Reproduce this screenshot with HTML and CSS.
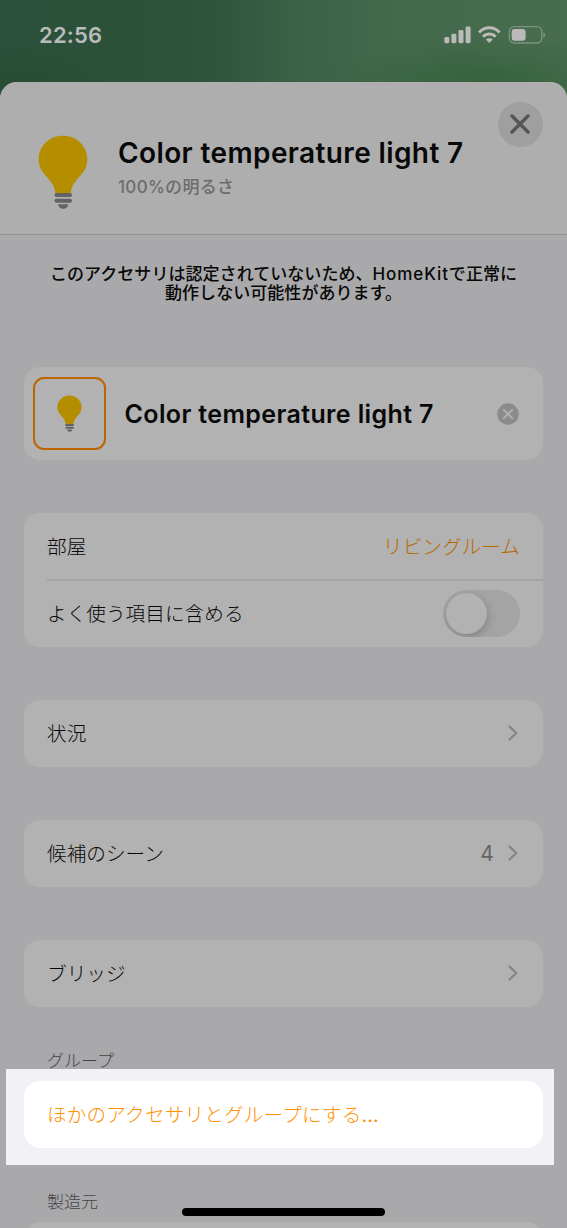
FILE: index.html
```html
<!DOCTYPE html>
<html lang="ja">
<head>
<meta charset="utf-8">
<title>Color temperature light 7</title>
<link rel="stylesheet" href="styles.css">
</head>
<body>
<svg class="defs" width="0" height="0" aria-hidden="true">
  <symbol id="bulb" viewBox="0 0 50 74">
    <path fill="var(--bulb)" d="M25 .8C11.2.8.7 11.4.7 24.4c0 7.6 3.5 12.3 8 17.4 5.2 5.8 8.3 10.2 8.500 16.800h15.600c.2-6.600 3.300-11 8.500-16.800 4.500-5.100 8-9.800 8-17.400C49.300 11.400 38.800.8 25 .8Z"/>
    <rect x="16.5" y="58" width="17.5" height="4" rx="2" fill="var(--base)"/>
    <rect x="16.5" y="63.7" width="17.5" height="4" rx="2" fill="var(--base)"/>
    <path fill="var(--base)" d="M20.300 69.200h9.800c0 2.800-2.200 4.500-4.900 4.500s-4.900-1.700-4.900-4.500Z"/>
  </symbol>
  <symbol id="chevron" viewBox="0 0 10 16">
    <path d="M1.500 1.500 8.300 8 1.500 14.500" fill="none" stroke="#858587" stroke-width="2.300" stroke-linecap="round" stroke-linejoin="round"/>
  </symbol>
</svg>
<div class="screen">
  <div class="status">
    <span class="clock">22:56</span>
    <svg class="indicators" width="102" height="20" viewBox="0 0 102 20">
      <g fill="#bababa">
        <rect x=".3" y="12" width="5" height="6.2" rx="1.4"/>
        <rect x="7.4" y="8.8" width="5" height="9.4" rx="1.4"/>
        <rect x="14.5" y="5" width="5" height="13.2" rx="1.4"/>
        <rect x="21.6" y="1.5" width="5" height="16.7" rx="1.4"/>
        <path d="M45.300 18 41.800 14.600c2-1.700 5-1.700 7 0Z"/>
      </g>
      <g fill="none" stroke="#bababa" stroke-width="3">
        <path d="M35.100 7.500c5.700-6.200 14.700-6.200 20.400 0"/>
        <path d="M39 11.700c3.500-3.700 9.100-3.700 12.600 0"/>
      </g>
      <rect x="65.3" y="1.7" width="32.5" height="16.3" rx="5" fill="none" stroke="#7c947f" stroke-width="1.3"/>
      <rect x="67.6" y="4" width="14" height="11.7" rx="3" fill="#bababa"/>
      <path d="M99.300 7.200c2.500 1 2.500 4.400 0 5.400Z" fill="#7c947f"/>
    </svg>
  </div>
  <main class="sheet">
    <header class="header">
      <svg class="bulb-large" width="50" height="74"><use href="#bulb"/></svg>
      <div class="heading">
        <h1 class="title">Color temperature light 7</h1>
        <p class="subtitle">100%の明るさ</p>
      </div>
      <button class="close" aria-label="閉じる">
        <svg width="20" height="20" viewBox="0 0 20 20"><path d="m2 2 16 16M18 2 2 18" stroke="#555557" stroke-width="3.3" stroke-linecap="round"/></svg>
      </button>
    </header>
    <p class="notice">このアクセサリは認定されていないため、<span class="latin">HomeKit</span>で正常に<br>動作しない可能性があります。</p>
    <section class="card name-card">
      <div class="icon-box"><svg width="25" height="37"><use href="#bulb"/></svg></div>
      <span class="name">Color temperature light 7</span>
      <svg class="clear" width="22" height="22" viewBox="0 0 22 22"><circle cx="11" cy="11" r="10.7" fill="#8b8b8c"/><path d="m6.800 6.800 8.400 8.400m0-8.400-8.400 8.400" stroke="#b2b2b2" stroke-width="1.9" stroke-linecap="round"/></svg>
    </section>
    <section class="card">
      <div class="row"><span>部屋</span><span class="room">リビングルーム</span></div>
      <div class="row divided"><span>よく使う項目に含める</span><span class="toggle"><span class="knob"></span></span></div>
    </section>
    <section class="card"><div class="row"><span>状況</span><svg class="chevron" width="10" height="16"><use href="#chevron"/></svg></div></section>
    <section class="card"><div class="row"><span>候補のシーン</span><span class="count">4</span><svg class="chevron" width="10" height="16"><use href="#chevron"/></svg></div></section>
    <section class="card"><div class="row"><span>ブリッジ</span><svg class="chevron" width="10" height="16"><use href="#chevron"/></svg></div></section>
    <h2 class="label">グループ</h2>
    <div class="spotlight"><section class="card bright"><div class="row"><span>ほかのアクセサリとグループにする<span class="dots">...</span></span></div></section></div>
    <h2 class="label maker">製造元</h2>
    <section class="card last"><div class="row"></div></section>
  </main>
  <div class="home-bar"></div>
</div>
</body>
</html>
```
FILE: styles.css
```css
:root {
  --bulb: #b58e00;
  --base: #636364;
  --orange: #b96800;
}
* { box-sizing: border-box; }
body { margin: 0; }
h1, h2, p { margin: 0; }
.defs { display: block; position: absolute; }
.screen {
  position: relative;
  width: 567px;
  height: 1228px;
  overflow: hidden;
  display: flex;
  flex-direction: column;
  font-family: Inter, "Noto Sans CJK JP", sans-serif;
  color: #080808;
  background:
    radial-gradient(ellipse 170px 45px at 480px 82px, #37633d, transparent),
    radial-gradient(ellipse 90px 36px at 25px 82px, #284d33, transparent),
    linear-gradient(90deg, #2b503b 0, #2d523b 170px, #30563f 225px, #3a6046 290px, #43694b 380px, #486c4e 567px);
}
.status {
  flex: none;
  height: 82px;
  padding: 20px 21px 0 39px;
  display: flex;
  justify-content: space-between;
}
.clock {
  font-size: 22px;
  line-height: 30px;
  font-weight: 600;
  letter-spacing: .2px;
  color: #bababa;
}
.indicators { margin-top: 5px; }
.sheet {
  flex: 1;
  min-height: 0;
  overflow: hidden;
  background: #a9a9ab;
  border-radius: 17px 17px 0 0;
  display: flex;
  flex-direction: column;
}
.header {
  flex: none;
  height: 153px;
  border-bottom: 1px solid #929294;
  background: #aeaeae;
  display: flex;
}
.bulb-large { flex: none; margin: 53px 30px 0 38px; }
.heading { flex: 1; padding-top: 52px; white-space: nowrap; }
.title {
  font-size: 28px;
  line-height: 38px;
  font-weight: 600;
  letter-spacing: .38px;
}
.subtitle {
  margin-top: 3px;
  font-size: 17px;
  line-height: 24px;
  font-weight: 500;
  letter-spacing: .3px;
  color: #6c6c6d;
}
.close {
  flex: none;
  width: 45px;
  height: 45px;
  margin: 19.5px 24.5px 0 0;
  padding: 0;
  border: 0;
  border-radius: 50%;
  background: #9f9f9f;
  display: flex;
  align-items: center;
  justify-content: center;
}
.notice {
  flex: none;
  height: 78px;
  margin: 30px 0 24px;
  font-size: 17px;
  line-height: 19px;
  font-weight: 500;
  letter-spacing: .05px;
  text-align: center;
  white-space: nowrap;
}
.latin { letter-spacing: .9px; }
.card {
  flex: none;
  margin: 0 24px 53px;
  border-radius: 16px;
  background: #b2b2b2;
}
.name-card {
  height: 93px;
  padding: 0 24px 0 9px;
  display: flex;
  align-items: center;
}
.icon-box {
  width: 73px;
  height: 73px;
  margin-right: 18.5px;
  border: 2px solid #bd6500;
  border-radius: 11px;
  display: flex;
  align-items: center;
  justify-content: center;
}
.name {
  flex: 1;
  font-size: 25px;
  line-height: 30px;
  font-weight: 600;
  letter-spacing: .37px;
  white-space: nowrap;
}
.row {
  height: 67px;
  padding: 0 23px;
  display: flex;
  align-items: center;
  justify-content: space-between;
  font-size: 19.6px;
  font-weight: 300;
  line-height: 30px;
  letter-spacing: .06px;
}
.room { color: var(--orange); }
.divided {
  position: relative;
}
.divided::before {
  content: "";
  position: absolute;
  top: -1px;
  left: 23px;
  right: 0;
  height: 2px;
  background: #a4a4a5;
}
.toggle {
  width: 77px;
  height: 47px;
  padding: 3px;
  border-radius: 24px;
  background: #a4a4a4;
  overflow: hidden;
}
.knob {
  display: block;
  width: 41px;
  height: 41px;
  border-radius: 50%;
  background: #b2b2b2;
  box-shadow: 1px 3px 9px rgba(0, 0, 0, .2);
}
.chevron { margin: 0 2px 1px 0; }
.count {
  margin: 0 14px 0 auto;
  font-size: 21px;
  font-weight: 400;
  color: #656566;
}
.label {
  flex: none;
  height: 22px;
  margin: -10px 0 0 47px;
  font-size: 17px;
  line-height: 22px;
  font-weight: 300;
  color: #454547;
}
.spotlight {
  flex: none;
  width: 548px;
  height: 96px;
  margin: -3px 0 0 6px;
  padding: 12px 11px 0 18px;
  background: #f1f1f6;
}
.bright {
  margin: 0;
  background: #fff;
  color: #ff9000;
}
.bright .row { letter-spacing: .18px; }
.dots { font-weight: 400; letter-spacing: .2px; }
.maker { margin: 26px 0 9px 47px; }
.last { margin-bottom: 0; }
.home-bar {
  position: absolute;
  left: 182px;
  top: 1208px;
  width: 203px;
  height: 8px;
  border-radius: 4px;
  background: #000;
}
```
